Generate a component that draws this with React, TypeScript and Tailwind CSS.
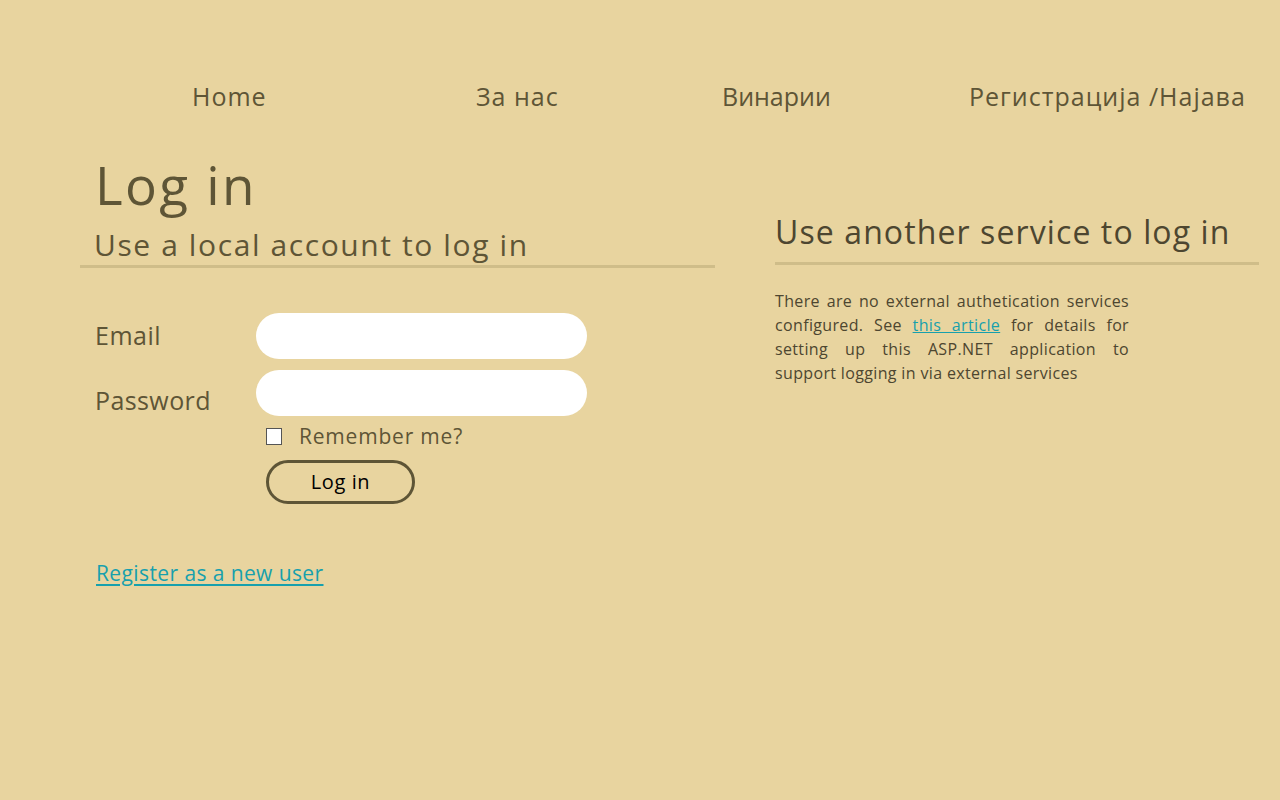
export default function App() {
  const font = { fontFamily: '"Open Sans", "Lato", sans-serif' };
  return (
    <div className="min-h-[800px] w-full bg-[#e8d49f] text-[#5e5536]" style={font}>
      <nav className="flex items-center pt-[78px] pl-[192px] text-[25px] leading-[36px] tracking-[1px]">
        <a className="w-[284px]">Home</a>
        <a className="w-[246px]">За нас</a>
        <a className="w-[247px] tracking-[0px]">Винарии</a>
        <a>Регистрација /Најава</a>
      </nav>

      <div className="flex pl-[80px] pt-[34px]">
        <section className="w-[635px]">
          <h1 className="pl-[15px] text-[53px] leading-[74px] tracking-[2.3px]">Log in</h1>
          <h2 className="pl-[14px] pt-[3px] text-[30px] leading-[40px] tracking-[1.6px] border-b-[3px] border-[#cfbd89]">
            Use a local account to log in
          </h2>

          <form className="pl-[15px] pt-[45px]">
            <div className="flex items-center">
              <label className="w-[161px] text-[25px] tracking-[0.5px]">Email</label>
              <input className="h-[46px] w-[331px] rounded-full bg-white outline-none" />
            </div>
            <div className="flex items-start mt-[11px]">
              <label className="w-[161px] text-[25px] tracking-[0.4px] leading-[46px] pt-[7px]">Password</label>
              <input type="password" className="h-[46px] w-[331px] rounded-full bg-white outline-none" />
            </div>
            <div className="flex items-center pl-[171px] mt-[1px]">
              <span className="w-[16px] h-[17px] bg-white border border-[#555]"></span>
              <span className="ml-[17px] text-[21px] leading-[24px] tracking-[0.8px]">Remember me?</span>
            </div>
            <div className="pl-[171px] mt-[12px]">
              <button
                type="button"
                className="h-[44px] w-[149px] rounded-full border-[3px] border-[#5e5536] text-[20px] tracking-[0.6px] text-black"
              >
                Log in
              </button>
            </div>
          </form>

          <div className="pl-[16px] mt-[54px]">
            <a className="text-[21px] tracking-[0.4px] text-[#17a0ad] underline underline-offset-[3px]">
              Register as a new user
            </a>
          </div>
        </section>

        <section className="ml-[60px] w-[484px] pt-[63px]">
          <h2 className="text-[32px] leading-[42px] tracking-[1.1px] text-[#4d4630] border-b-[3px] border-[#cfbd89] pb-[9px]">
            Use another service to log in
          </h2>
          <p className="mt-[24px] w-[354px] text-justify text-[16px] leading-[24px] tracking-[0.35px] text-[#4d4630]">
            There are no external authetication services configured. See{' '}
            <a className="text-[#17a0ad] underline">this article</a> for details for setting up this
            ASP.NET application to support logging in via external services
          </p>
        </section>
      </div>
    </div>
  );
}
